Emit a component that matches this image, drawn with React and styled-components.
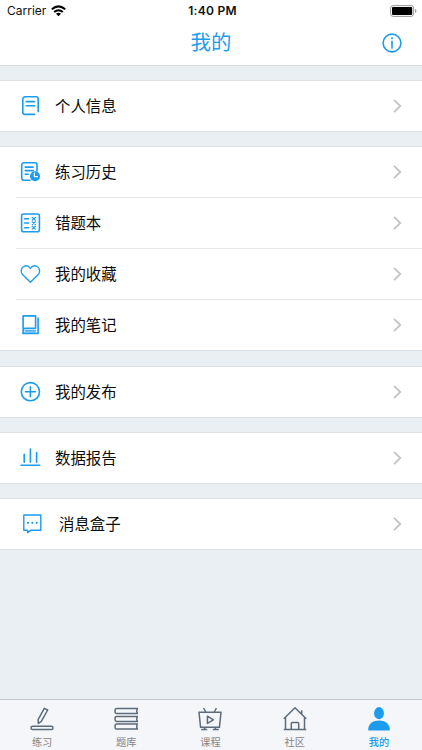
import React from 'react';
import styled, { createGlobalStyle } from "styled-components";

const blue = "#1c9cee";

const GlobalStyle = createGlobalStyle`
    *{
        box-sizing: border-box;
    }
    body{
        margin: 0;
        background: #e9eff2;
        font-family: "Liberation Sans", "Noto Sans CJK SC", sans-serif;
    }
`

const icons = {
    profile: (
        <>
            <path d="M14.5 19.4H5a2.2 2.2 0 0 1-2.2-2.2V4A2.2 2.2 0 0 1 5 1.8h11A2.2 2.2 0 0 1 18.2 4v12.6"/>
            <path d="M6.2 6.6h8.4M6.2 10.7h8.4"/>
        </>
    ),
    history: (
        <>
            <path d="M10 19.3H3.9a2.2 2.2 0 0 1-2.2-2.2V4a2.2 2.2 0 0 1 2.2-2.2h10.9A2.2 2.2 0 0 1 17 4v6"/>
            <path d="M5.2 6.1h8M5.2 9.6h8M5.2 13.3h3"/>
            <circle cx="15" cy="15.2" r="5" fill={blue} stroke="none"/>
            <path d="M14.4 12v3.6h3.1" stroke="#fff" strokeWidth="1.2"/>
        </>
    ),
    wrong: (
        <>
            <rect x="1.6" y="2" width="17.8" height="17.8" rx="2"/>
            <path d="M4.6 6.8h4M4.6 11h4M4.6 15.7h4" strokeWidth="1.4"/>
            <path d="M12.2 5.4l3.2 2.8m0-2.8l-3.2 2.8M12.2 9.8l3.2 2.8m0-2.8l-3.2 2.8M12.2 14.3l3.2 2.8m0-2.8l-3.2 2.8" strokeWidth="1.2"/>
        </>
    ),
    heart: (
        <path strokeWidth="1.4" d="M10.4 19.2L3 12.1C.2 9.3.8 5 3.7 3.5 6 2.3 8.8 2.9 10.4 5.5 12 2.9 14.8 2.3 17.1 3.5 20 5 20.6 9.3 17.8 12.1z"/>
    ),
    notes: (
        <>
            <rect x="3.1" y="14.2" width="12.7" height="5.4" fill="#c9e8fc" stroke="none"/>
            <path d="M3.1 19.4V1.9h12.5v12.3H5.3q-2.2 0-2.2 2.2"/>
            <path d="M3.1 19.4h15V4"/>
            <path d="M5.4 16.8h10.2" strokeWidth="1.2"/>
        </>
    ),
    publish: (
        <>
            <circle cx="10.4" cy="10.7" r="9.1"/>
            <path d="M10.4 5.7v10M5.4 10.7h10"/>
        </>
    ),
    report: (
        <path d="M4.2 7.2v8M10.4 2v13.2M16.6 5.5v9.7M1 18.3h18.8"/>
    ),
    message: (
        <>
            <path strokeWidth="1.4" d="M3.8 2h17v15.2h-9.7l-3.5 2.4v-2.4H3.8z"/>
            <path d="M8 9.8h.01M12.3 9.8h.01M16.7 9.8h.01" strokeWidth="2.2"/>
        </>
    )
}

const tabs = [
    {
        label: "练习",
        icon: (
            <>
                <path d="M14.3 2.3l3.4 1.7-6.4 11.3-3 2.2-.2-3.9z"/>
                <rect x="1" y="20.3" width="22" height="3.2" rx="1.6"/>
            </>
        )
    },
    {
        label: "题库",
        icon: (
            <>
                <path d="M23.6 2.6h-21Q1.1 2.6 1.1 4v2.2q0 1.4 1.5 1.4h21q-1.8-2.5 0-5z"/>
                <path d="M23.6 10.4h-21q-1.5 0-1.5 1.4V14q0 1.4 1.5 1.4h21q-1.8-2.5 0-5z"/>
                <path d="M23.6 18.1h-21q-1.5 0-1.5 1.4v2.2q0 1.4 1.5 1.4h21q-1.8-2.5 0-5z"/>
            </>
        )
    },
    {
        label: "课程",
        icon: (
            <>
                <path d="M1 6.3h22l-1.6 15H2.6zM7.8 6L5.6 2M16.2 6l2.2-4"/>
                <path d="M9.4 10.2v7.2l6-3.6zM3.2 23.6h6M14.8 23.6h6M6.6 21.3v2M17.4 21.3v2"/>
            </>
        )
    },
    {
        label: "社区",
        icon: (
            <>
                <path d="M.8 12.8L12 1.7l11.2 11.1M2.5 11.5v12.1M21.5 23.6V11.5M.8 23.6h22.4M18.7 8V4.2"/>
                <path d="M8.3 23.4v-5.8q0-1 1-1h5.4q1 0 1 1v5.8"/>
            </>
        )
    },
    {
        label: "我的",
        active: true,
        icon: (
            <g fill={blue} stroke="none">
                <ellipse cx="12" cy="7.2" rx="4.9" ry="6.1"/>
                <path d="M1.2 24.4C.9 17.5 6.2 14.5 12 14.5s11.100 3 10.800 9.900z"/>
            </g>
        )
    }
]

const groups = [
    { gap: 14, rows: [{ icon: "profile", label: "个人信息" }] },
    {
        gap: 14,
        rows: [
            { icon: "history", label: "练习历史" },
            { icon: "wrong", label: "错题本" },
            { icon: "heart", label: "我的收藏" },
            { icon: "notes", label: "我的笔记" }
        ]
    },
    { gap: 15, rows: [{ icon: "publish", label: "我的发布" }] },
    { gap: 14, rows: [{ icon: "report", label: "数据报告" }] },
    { gap: 14, rows: [{ icon: "message", label: "消息盒子", indent: true }] }
]

const StatusBar = () => (
    <Status>
        <Carrier>
            Carrier
            <svg width="15" height="12" viewBox="0 0 15 12" fill="none" stroke="#000" strokeWidth="2">
                <path d="M.8 4.2Q7.5-1.4 14.2 4.2M3.2 7q4.3-3.6 8.6 0"/>
                <path d="M7.5 11.2L5 8.8q2.5-2 5 0z" fill="#000" stroke="none"/>
            </svg>
        </Carrier>
        <Clock>1:40 PM</Clock>
        <Battery>
            <svg width="27" height="12" viewBox="0 0 27 12">
                <rect x=".6" y=".6" width="23" height="10.8" rx="2.5" fill="#fff" stroke="#999"/>
                <rect x="2" y="2" width="20.2" height="8" rx="1" fill="#000"/>
                <path d="M25 4q1.500.5 1.500 2T25 8z" fill="#999"/>
            </svg>
        </Battery>
    </Status>
)

const Row = ({ icon, label, indent }) => (
    <RowItem>
        <RowIcon viewBox="0 0 22 22">{icons[icon]}</RowIcon>
        <RowBody $indent={indent}>
            <Label>{label}</Label>
            <Chevron viewBox="0 0 9 14">
                <path d="M1 .9L7.3 7 1 13.1"/>
            </Chevron>
        </RowBody>
    </RowItem>
)

const App = () => {
    return (
        <Page>
            <GlobalStyle/>
            <Header>
                <StatusBar/>
                <TitleBar>
                    <Title>我的</Title>
                    <Info viewBox="0 0 20 20">
                        <circle cx="10" cy="10" r="8.9"/>
                        <path d="M10 7.7v7.7"/>
                        <path d="M10 4.3v2"/>
                    </Info>
                </TitleBar>
            </Header>
            <Content>
                {groups.map((group) => (
                    <Group key={group.rows[0].icon} $gap={group.gap}>
                        {group.rows.map((row) => <Row key={row.icon} {...row}/>)}
                    </Group>
                ))}
            </Content>
            <TabBar>
                {tabs.map((tab) => (
                    <Tab key={tab.label} $active={tab.active}>
                        <svg viewBox="0 0 24 25">{tab.icon}</svg>
                        <span>{tab.label}</span>
                    </Tab>
                ))}
            </TabBar>
        </Page>
    );
}

const Page = styled.div`
    display: flex;
    flex-direction: column;
    width: 100%;
    height: 750px;
    overflow: hidden;
`
const Header = styled.header`
    height: 66px;
    background: #fff;
    border-bottom: 1px solid #d6d9dc;
`
const Status = styled.div`
    display: grid;
    grid-template-columns: 1fr auto 1fr;
    align-items: center;
    height: 21px;
    padding: 0 5px 0 7px;
    font-family: Inter, "Liberation Sans", sans-serif;
    font-size: 12px;
    line-height: 21px;
    color: #111;
`
const Carrier = styled.div`
    display: flex;
    align-items: center;
    gap: 5px;
`
const Clock = styled.div`
    padding-left: 1px;
    font-weight: 600;
    letter-spacing: 0.3px;
`
const Battery = styled.div`
    display: flex;
    justify-content: flex-end;
`
const TitleBar = styled.div`
    display: grid;
    grid-template-columns: 1fr auto 1fr;
    align-items: center;
    height: 44px;
    padding: 0 20px;
`
const Title = styled.h1`
    grid-column: 2;
    margin: 0;
    font-size: 20.4px;
    font-weight: 400;
    line-height: 40px;
    color: ${blue};
`
const Info = styled.svg`
    justify-self: end;
    width: 20px;
    height: 20px;
    fill: none;
    stroke: ${blue};
    stroke-width: 1.6;
`
const Content = styled.main`
    flex: 1;
`
const Group = styled.section`
    margin-top: ${({ $gap }) => $gap}px;
    background: #fff;
    border-top: 1px solid #dde1e4;
    border-bottom: 1px solid #dde1e4;
`
const RowItem = styled.div`
    display: flex;
    align-items: center;
    padding-left: 4px;
    margin-left: 16px;
    color: #0c0c0c;
    & + &{
        border-top: 1px solid #e4e6e8;
    }
`
const RowIcon = styled.svg`
    width: 22px;
    height: 22px;
    fill: none;
    stroke: ${blue};
    stroke-width: 1.6;
    stroke-linecap: round;
    stroke-linejoin: round;
`
const RowBody = styled.div`
    flex: 1;
    display: flex;
    align-items: center;
    justify-content: space-between;
    height: 50px;
    padding-left: ${({ $indent }) => $indent ? 17 : 13}px;
    padding-right: 20px;
`
const Label = styled.span`
    padding-top: 2px;
    font-size: 15.4px;
    line-height: 24px;
`
const Chevron = styled.svg`
    width: 9px;
    height: 14px;
    fill: none;
    stroke: #c3c3c8;
    stroke-width: 1.8;
`
const TabBar = styled.nav`
    display: grid;
    grid-template-columns: repeat(5, 1fr);
    height: 51px;
    padding-right: 1px;
    background: #f5f6f9;
    border-top: 1px solid #c6cacf;
`
const Tab = styled.div`
    display: flex;
    flex-direction: column;
    align-items: center;
    padding-top: 6px;
    font-size: 10.2px;
    line-height: 14px;
    font-weight: ${({ $active }) => $active ? 500 : 400};
    color: ${({ $active }) => $active ? blue : "#858585"};
    svg{
        width: 24px;
        height: 25px;
        fill: none;
        stroke: #5d6b7b;
        stroke-width: 1.5;
        stroke-linejoin: round;
    }
    span{
        margin-top: 5px;
    }
`
export default App;
